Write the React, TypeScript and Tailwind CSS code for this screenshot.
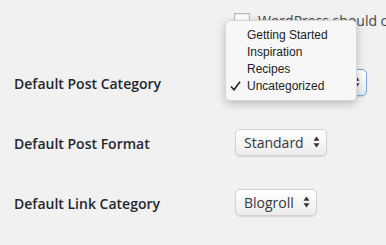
import React from "react";

const label = "text-[14px] font-semibold text-[#23282d] [font-family:'Open_Sans',sans-serif]";

function Arrows() {
  return (
    <svg width="7" height="12" viewBox="0 0 7 12" className="shrink-0">
      <path d="M3.5 0.5 L6.5 4.8 L0.5 4.8 Z" fill="#333" />
      <path d="M3.5 11.5 L6.5 7.2 L0.5 7.2 Z" fill="#333" />
    </svg>
  );
}

function Select({ value, width, focused }: { value: string; width: string; focused?: boolean }) {
  return (
    <div
      className={`flex h-[27px] shrink-0 items-center justify-between rounded-[5px] border bg-gradient-to-b from-white to-[#ececec] pl-[8px] pr-[6px] shadow-[0_1px_1px_rgba(0,0,0,0.12)] ${width} ${
        focused ? "border-[#7aa7e0] shadow-[0_0_0_1px_#a9c8ef]" : "border-[#d2d2d2]"
      }`}
    >
      <span className="text-[14px] text-[#32373c] [font-family:'Open_Sans',sans-serif]">{value}</span>
      <Arrows />
    </div>
  );
}

function Row({ title, children }: { title: string; children: React.ReactNode }) {
  return (
    <div className="flex h-[60px] items-center">
      <div className={`w-[235px] shrink-0 pl-[14px] pt-[2px] ${label}`}>{title}</div>
      {children}
    </div>
  );
}

export default function App() {
  const cats = ["Getting Started", "Inspiration", "Recipes", "Uncategorized"];
  return (
    <div className="relative h-[245px] w-[386px] overflow-hidden bg-[#f1f1f1]">
      {/* checkbox row */}
      <div className="flex items-center whitespace-nowrap pl-[234px] pt-[13px]">
        <div className="h-[16px] w-[16px] shrink-0 border border-[#b4b9be] bg-white shadow-[inset_0_1px_2px_rgba(0,0,0,0.1)]" />
        <span className="ml-[8px] text-[14px] leading-[16px] text-[#444] [font-family:'Open_Sans',sans-serif]">
          WordPress should correct invalidly nested XHTML automatically
        </span>
      </div>

      <div className="pt-[23px]">
        <Row title="Default Post Category">
          <Select value="Uncategorized" width="w-[132px]" focused />
        </Row>
        <Row title="Default Post Format">
          <Select value="Standard" width="w-[92px]" />
        </Row>
        <Row title="Default Link Category">
          <Select value="Blogroll" width="w-[82px]" />
        </Row>
      </div>

      {/* open native menu */}
      <div className="absolute left-[225px] top-[20px] w-[132px] rounded-[5px] border border-[#d6d6d6] bg-[#f7f7f7] pb-[6px] pt-[5px] shadow-[0_3px_10px_rgba(0,0,0,0.22)]">
        {cats.map((c) => (
          <div key={c} className="relative flex h-[17px] items-center pl-[21px] text-[12px] text-[#222] [font-family:'Liberation_Sans',Arial,sans-serif]">
            {c === "Uncategorized" && (
              <svg width="11" height="10" viewBox="0 0 11 10" className="absolute left-[4px] top-[4px]">
                <path d="M1 5.5 L4 8.8 L10 0.8" fill="none" stroke="#222" strokeWidth="1.6" />
              </svg>
            )}
            {c}
          </div>
        ))}
      </div>
    </div>
  );
}
